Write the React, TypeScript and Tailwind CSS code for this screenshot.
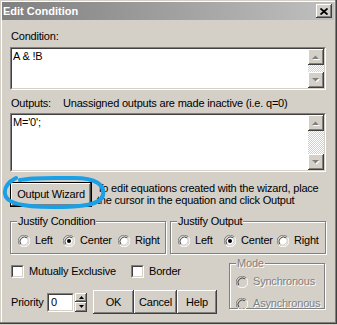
import React from "react";

const raised =
  "shadow-[inset_-1px_-1px_0_#404040,inset_1px_1px_0_#ffffff,inset_-2px_-2px_0_#808080,inset_2px_2px_0_#d4d0c8]";

function Sunken({ className, children }: { className?: string; children?: React.ReactNode }) {
  return (
    <div className={"border border-t-[#808080] border-l-[#808080] border-b-white border-r-white " + (className || "")}>
      <div className="border border-t-[#404040] border-l-[#404040] border-b-[#d4d0c8] border-r-[#d4d0c8] w-full h-full bg-white flex">
        {children}
      </div>
    </div>
  );
}

function Arrow({ up }: { up?: boolean }) {
  return (
    <svg width="8" height="5" viewBox="0 0 8 5" className="block">
      {up ? (
        <>
          <polygon points="4.5,1.5 8,5 1,5" fill="#ffffff" />
          <polygon points="3.5,0.5 7,4 0,4" fill="#808080" />
        </>
      ) : (
        <>
          <polygon points="1,1 8,1 4.5,4.5" fill="#ffffff" />
          <polygon points="0,0 7,0 3.5,3.5" fill="#808080" />
        </>
      )}
    </svg>
  );
}

function ScrollBtn({ up }: { up?: boolean }) {
  return (
    <div className={"w-[16px] h-[16px] bg-[#d4d0c8] flex items-center justify-center shrink-0 " + raised}>
      <Arrow up={up} />
    </div>
  );
}

function VScroll() {
  return (
    <div className="w-[16px] h-full flex flex-col ml-auto">
      <ScrollBtn up />
      <div className="flex-1 bg-[image:conic-gradient(#ffffff_25%,#d4d0c8_0_50%,#ffffff_0_75%,#d4d0c8_0)] bg-[length:2px_2px]" />
      <ScrollBtn />
    </div>
  );
}

function Radio({ checked, disabled }: { checked?: boolean; disabled?: boolean }) {
  return (
    <svg width="12" height="12" viewBox="0 0 12 12" className="block shrink-0">
      <path d="M10.5 2.2 A5.6 5.6 0 0 0 1.6 9.8" stroke="#808080" strokeWidth="1" fill="none" />
      <path d="M1.6 9.8 A5.6 5.6 0 0 0 10.5 2.2" stroke="#ffffff" strokeWidth="1" fill="none" />
      <circle cx="6" cy="6" r="4.5" fill={disabled ? "#d4d0c8" : "#ffffff"} />
      <path d="M9.2 2.9 A4.5 4.5 0 0 0 2.9 9.2" stroke="#404040" strokeWidth="1" fill="none" />
      <path d="M2.9 9.2 A4.5 4.5 0 0 0 9.2 2.9" stroke="#d4d0c8" strokeWidth="1" fill="none" />
      {checked && <circle cx="6" cy="6" r="2" fill="#000000" />}
    </svg>
  );
}

function Check() {
  return <Sunken className="w-[13px] h-[13px] shrink-0" />;
}

function Group({ label, className, children, disabled }: { label: string; className?: string; children?: React.ReactNode; disabled?: boolean }) {
  return (
    <div className={"relative border border-[#808080] shadow-[1px_1px_0_#ffffff,inset_1px_1px_0_#ffffff] " + (className || "")}>
      <span
        className={
          "absolute -top-[7px] left-[6px] px-[1px] bg-[#d4d0c8] leading-[13px] " +
          (disabled ? "text-[#808080] [text-shadow:1px_1px_0_#ffffff]" : "")
        }
      >
        {label}
      </span>
      {children}
    </div>
  );
}

function RadioItem({ label, checked, w, disabled }: { label: string; checked?: boolean; w?: string; disabled?: boolean }) {
  return (
    <div className={"flex items-center gap-[5px] " + (w || "")}>
      <Radio checked={checked} disabled={disabled} />
      <span className={disabled ? "text-[#808080] [text-shadow:1px_1px_0_#ffffff]" : ""}>{label}</span>
    </div>
  );
}

function Button({ children, className }: { children: React.ReactNode; className?: string }) {
  return (
    <div className={"h-[24px] bg-[#d4d0c8] flex items-center justify-center " + raised + " " + (className || "")}>
      {children}
    </div>
  );
}

export default function App() {
  return (
    <div className="w-[337px] h-[325px] bg-[#d4d0c8] font-['Liberation_Sans',Arial,sans-serif] text-[11px] leading-[13px] text-black tracking-[-0.2px] overflow-hidden">
      <div className="relative w-[337px] h-[324px] pt-[2px] pl-[2px] pr-[3px] shadow-[inset_-1px_-1px_0_#404040,inset_-2px_-2px_0_#808080,inset_1px_1px_0_#d4d0c8,inset_2px_2px_0_#ffffff]">
        {/* title bar */}
        <div className="h-[18px] bg-gradient-to-r from-[#808080] to-[#c0c0c0] flex items-center pl-[1px] pr-[2px]">
          <span className="text-white font-bold text-[11px] tracking-normal">Edit Condition</span>
          <div className={"ml-auto w-[16px] h-[14px] bg-[#d4d0c8] flex items-center justify-center " + raised}>
            <svg width="8" height="7" viewBox="0 0 8 7" className="block">
              <path d="M0.5 0.5 L7.5 6.5 M7.5 0.5 L0.5 6.5" stroke="#000" strokeWidth="1.8" />
            </svg>
          </div>
        </div>

        <div className="pl-[8px] pr-[8px] flex flex-col">
          <div className="mt-[10px] pl-[1px]">Condition:</div>
          <Sunken className="mt-[4px] h-[43px]">
            <div className="pl-[1px] pt-[1px]">A &amp; !B</div>
            <VScroll />
          </Sunken>

          <div className="mt-[7px] pl-[1px] flex">
            <span className="w-[52px]">Outputs:</span>
            <span>Unassigned outputs are made inactive (i.e. q=0)</span>
          </div>
          <Sunken className="mt-[3px] h-[59px]">
            <div className="pl-[1px] pt-[1px]">M='0';</div>
            <VScroll />
          </Sunken>

          <div className="mt-[10px] flex relative">
            <div className="w-[82px] h-[25px] border border-black shrink-0">
              <div className={"w-full h-full flex items-center justify-center bg-[#d4d0c8] " + raised}>
                Output Wizard
              </div>
            </div>
            <div className="ml-[5px] leading-[12px] w-[230px]">
              To edit equations created with the wizard, place the cursor in the equation and click Output
            </div>
            <svg width="112" height="42" viewBox="0 0 112 42" className="absolute -left-[8px] -top-[9px] pointer-events-none">
              <path
                d="M14 5 C6 9 2 14 3 21 C4 31 24 34 50 34 C80 34 99 32 101 22 C103 12 94 5 72 5 C52 5 32 4 18 7"
                stroke="#1aa0e6"
                strokeWidth="4"
                fill="none"
                strokeLinecap="round"
              />
            </svg>
          </div>

          <div className="mt-[14px] flex gap-[4px]">
            <Group label="Justify Condition" className="w-[156px] h-[33px]">
              <div className="flex items-center pl-[7px] pt-[12px]">
                <RadioItem label="Left" w="w-[45px]" />
                <RadioItem label="Center" checked w="w-[55px]" />
                <RadioItem label="Right" />
              </div>
            </Group>
            <Group label="Justify Output" className="w-[156px] h-[33px]">
              <div className="flex items-center pl-[7px] pt-[12px]">
                <RadioItem label="Left" w="w-[46px]" />
                <RadioItem label="Center" checked w="w-[53px]" />
                <RadioItem label="Right" />
              </div>
            </Group>
          </div>

          <div className="mt-[9px] flex">
            <div className="w-[219px] flex flex-col">
              <div className="mt-[2px] flex items-center h-[13px]">
                <div className="pl-[1px] flex items-center gap-[5px] w-[121px]">
                  <Check />
                  <span>Mutually Exclusive</span>
                </div>
                <div className="flex items-center gap-[5px]">
                  <Check />
                  <span>Border</span>
                </div>
              </div>
              <div className="mt-[12px] flex items-center h-[24px]">
                <span className="pl-[1px] w-[37px]">Priority</span>
                <Sunken className="w-[27px] h-[19px]">
                  <div className="pl-[2px] pt-[1px]">0</div>
                </Sunken>
                <div className="ml-[1px] flex flex-col h-[19px]">
                  <div className={"w-[12px] h-[9px] bg-[#d4d0c8] flex items-center justify-center " + raised}>
                    <svg width="5" height="3" viewBox="0 0 5 3" className="block">
                      <polygon points="2.5,0 5,3 0,3" fill="#000" />
                    </svg>
                  </div>
                  <div className={"w-[12px] h-[10px] bg-[#d4d0c8] flex items-center justify-center " + raised}>
                    <svg width="5" height="3" viewBox="0 0 5 3" className="block">
                      <polygon points="0,0 5,0 2.5,3" fill="#000" />
                    </svg>
                  </div>
                </div>
                <Button className="ml-[6px] w-[41px]">OK</Button>
                <Button className="w-[43px]">Cancel</Button>
                <Button className="w-[40px]">Help</Button>
              </div>
            </div>
            <Group label="Mode" disabled className="w-[96px] h-[46px]">
              <div className="flex flex-col pl-[6px] pt-[11px] gap-[9px]">
                <RadioItem label="Synchronous" disabled />
                <RadioItem label="Asynchronous" disabled />
              </div>
            </Group>
          </div>
        </div>
      </div>
    </div>
  );
}
